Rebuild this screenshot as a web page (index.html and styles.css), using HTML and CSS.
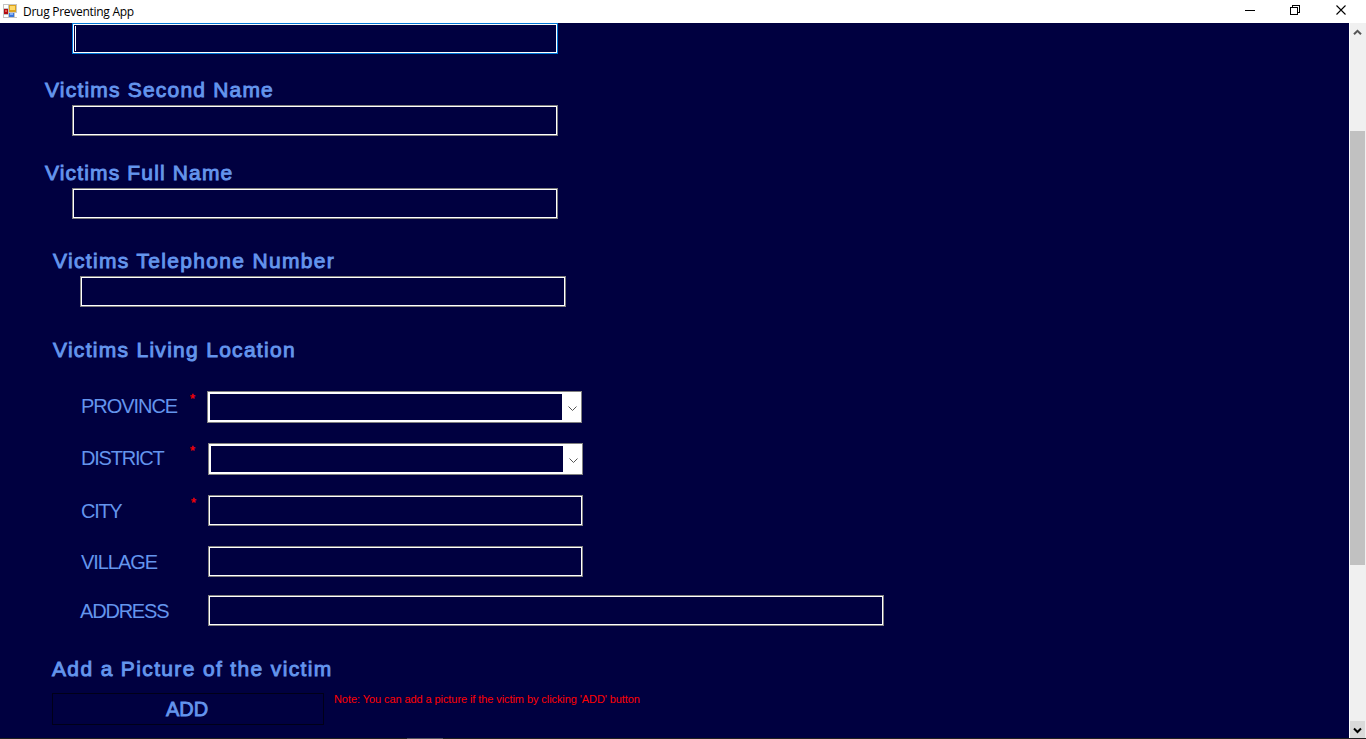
FILE: index.html
```html
<!DOCTYPE html>
<html lang="en">
<head>
<meta charset="utf-8">
<title>Drug Preventing App</title>
<link rel="stylesheet" href="styles.css">
</head>
<body>
<header class="titlebar">
  <svg class="app-icon" width="14" height="14" viewBox="0 0 14 14" shape-rendering="crispEdges">
    <rect width="14" height="14" fill="#c4c4c4"/>
    <rect x="1" y="1" width="4" height="3" fill="#fff"/><rect x="1" y="11" width="4" height="2" fill="#fff"/><rect x="12" y="9" width="2" height="4" fill="#fff"/>
    <rect x="1" y="5" width="4" height="5" fill="#b40b12"/><rect x="2" y="6" width="2" height="2" fill="#e05a50"/>
    <rect x="6" y="1" width="7" height="7" fill="#dba21d"/><rect x="7" y="2" width="5" height="4" fill="#ffd967"/>
    <rect x="6" y="9" width="5" height="4" fill="#3a74d8"/><rect x="7" y="9" width="3" height="2" fill="#86b0f4"/>
  </svg>
  <span class="app-title">Drug Preventing App</span>
  <svg class="window-buttons" width="104" height="23" viewBox="0 0 104 23" fill="none" stroke="#000">
    <path d="M0 10.500h10M45.500 7.500h7v7h-7zM47.500 7.500v-2h7v7h-2" shape-rendering="crispEdges"/>
    <path d="M91.500 5.500l9 9M100.500 5.500l-9 9" stroke-width="1.100"/>
  </svg>
</header>
<div class="window-body">
  <main class="form">
    <div class="text-box name-box focused"><span class="caret"></span></div>
    <h2 class="heading second-name">Victims Second Name</h2>
    <div class="text-box name-box"></div>
    <h2 class="heading full-name">Victims Full Name</h2>
    <div class="text-box name-box"></div>
    <h2 class="heading telephone">Victims Telephone Number</h2>
    <div class="text-box phone-box"></div>
    <h2 class="heading location">Victims Living Location</h2>
    <div class="row province">
      <span class="label">PROVINCE</span><span class="star">*</span>
      <div class="combo"><svg width="9" height="5" viewBox="0 0 9 5"><path d="M.5.5l4 4l4-4" fill="none" stroke="#555"/></svg></div>
    </div>
    <div class="row district">
      <span class="label">DISTRICT</span><span class="star">*</span>
      <div class="combo"><svg width="9" height="5" viewBox="0 0 9 5"><path d="M.5.5l4 4l4-4" fill="none" stroke="#555"/></svg></div>
    </div>
    <div class="row city"><span class="label">CITY</span><span class="star">*</span><div class="text-box"></div></div>
    <div class="row village"><span class="label">VILLAGE</span><span class="star"></span><div class="text-box"></div></div>
    <div class="row address"><span class="label">ADDRESS</span><span class="star"></span><div class="text-box"></div></div>
    <h2 class="heading picture">Add a Picture of the victim</h2>
    <div class="picture-row">
      <div class="add-button"><span>ADD</span></div>
      <span class="note">Note: You can add a picture if the victim by clicking 'ADD' button</span>
    </div>
  </main>
  <aside class="scrollbar">
    <div class="scroll-up"><svg width="9" height="7" viewBox="0 0 9 7"><path d="M1 5.300L4.500 1.800L8 5.300" fill="none" stroke="#555" stroke-width="2"/></svg></div>
    <div class="scroll-track"><div class="thumb"></div></div>
    <div class="scroll-down"><svg width="9" height="7" viewBox="0 0 9 7"><path d="M1 1.500L4.500 5L8 1.500" fill="none" stroke="#000" stroke-width="2"/></svg></div>
  </aside>
</div>
<footer class="bottom-edge"><div class="edge-mark"></div></footer>
</body>
</html>
```
FILE: styles.css
```css
* { box-sizing: border-box; }
body { margin: 0; width: 1366px; height: 739px; overflow: hidden; display: flex; flex-direction: column; background: #000040; font-family: "Liberation Sans", Arial, sans-serif; }
svg { display: block; }
.titlebar { height: 23px; flex: none; display: flex; background: #fff; padding-left: 3px; }
.app-icon { margin-top: 4px; }
.app-title { margin-left: 6px; font: 12px/24px "Open Sans", "Noto Sans", sans-serif; letter-spacing: -.28px; color: #000; white-space: nowrap; }
.window-buttons { margin-left: auto; margin-right: 17px; }
.window-body { height: 715px; flex: none; display: flex; }
.form { flex: 1; overflow: hidden; }
.text-box { height: 31px; border: 1px solid #808080; box-shadow: inset 0 0 0 1px #fff; }
.name-box, .phone-box { width: 486px; margin-left: 72px; }
.phone-box { margin-left: 80px; }
.focused { border-color: #0078d7; padding: 2px; }
.caret { display: block; width: 1px; height: 25px; background: #fff; }
.heading { margin: 0 0 0 45px; height: 24px; font-size: 21px; line-height: 24px; font-weight: normal; -webkit-text-stroke: .9px #6495ed; color: #6495ed; white-space: nowrap; letter-spacing: 1.2px; }
.second-name { margin-top: 24px; margin-bottom: 3px; }
.full-name { margin-top: 25px; margin-bottom: 3px; letter-spacing: 1.15px; }
.telephone { margin: 30px 0 3px 53px; letter-spacing: 1.33px; }
.location { margin: 31px 0 29px 53px; letter-spacing: 1.29px; }
.row { display: grid; grid-template-columns: 109px 19px auto; padding-left: 80px; justify-content: start; }
.row .text-box { width: 375px; }
.label { font-size: 20px; line-height: 31px; letter-spacing: -1.05px; color: #6495ed; white-space: nowrap; }
.province .label, .district .label { padding-left: 1px; }
.district .label { letter-spacing: -1.2px; }
.city .label, .village .label { padding-left: 1px; }
.city .label { letter-spacing: -1.3px; }
.city .label, .village .label, .address .label { line-height: 33px; height: 31px; }
.address .label { letter-spacing: -1.2px; }
.star { padding-left: 1px; font-size: 13px; line-height: 15px; color: #f00; -webkit-text-stroke: .3px #f00; }
.combo { width: 375px; height: 32px; border: 1px solid #808080; box-shadow: inset 0 0 0 2px #fff; display: flex; justify-content: flex-end; }
.combo svg { width: 19px; height: 30px; padding: 14px 4px 11px 6px; background: #fff; }
.province { grid-template-columns: 109px 18px auto; }
.district { margin-top: 20px; }
.city { margin-top: 20px; grid-template-columns: 110px 18px auto; }
.village { margin-top: 20px; }
.address { margin-top: 18px; }
.address .text-box { width: 676px; }
.picture { margin: 31px 0 12px 52px; letter-spacing: 1.36px; line-height: 23px; }
.picture-row { display: flex; padding-left: 52px; }
.add-button { width: 272px; height: 32px; border: 1px solid #000018; color: #6495ed; font-size: 20px; -webkit-text-stroke: .8px #6495ed; line-height: 31px; text-align: center; padding-right: 2px; }
.note { margin-left: 10px; font-size: 11px; line-height: 13px; letter-spacing: -.08px; color: #f00; white-space: nowrap; }
.scrollbar { width: 17px; border-left: 1px solid #fff; background: #f0f0f0; display: flex; flex-direction: column; }
.scroll-up, .scroll-down { height: 17px; padding: 6px 0 0 3px; }
.scroll-down { background: #dadada; margin-right: 1px; }
.scroll-track { flex: 1; padding-top: 91px; }
.thumb { width: 15px; height: 434px; background: #c1c1c1; }
.bottom-edge { height: 1px; background: #202020; }
.edge-mark { width: 36px; height: 1px; margin-left: 407px; background: #55555c; }
```
